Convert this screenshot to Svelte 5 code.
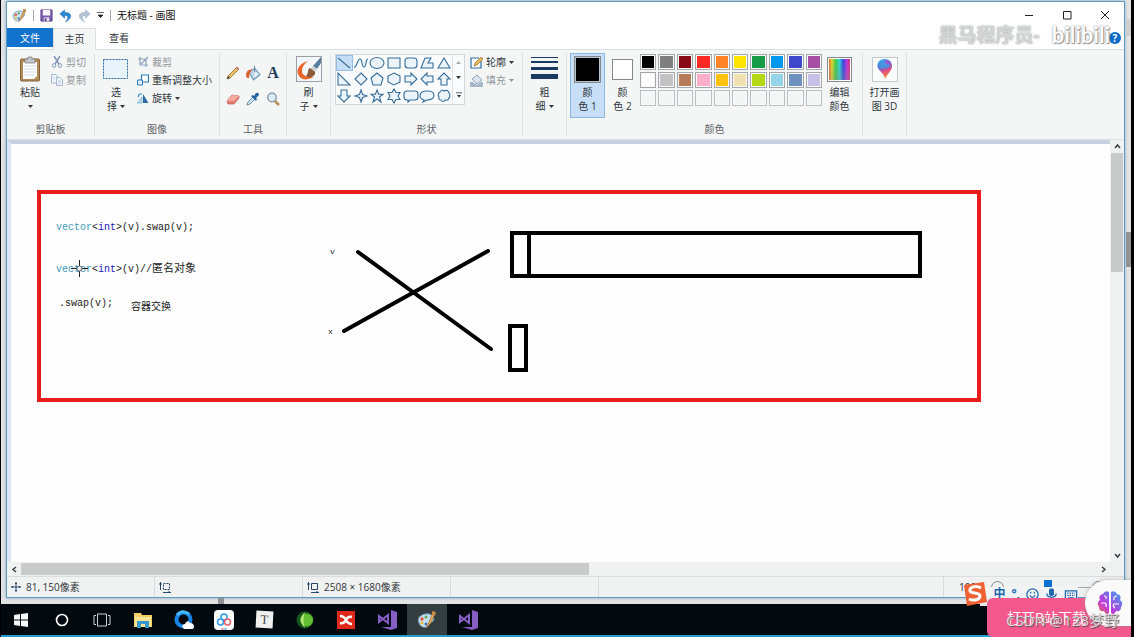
<script lang="ts">
  interface Shape {
    name: string;
    d: string;
  }

  // Shape gallery, each drawn in a 16x16 box
  const shapes: Shape[] = [
    { name: '直线', d: 'M2 3L14 13' },
    { name: '曲线', d: 'M1 12C4 13 4 4 7 4S8 12 11 12S12 4 15 4' },
    { name: '椭圆形', d: 'M1 8a7 5.500 0 1 0 14 0a7 5.500 0 1 0-14 0Z' },
    { name: '矩形', d: 'M2 3H14V13H2Z' },
    { name: '圆角矩形', d: 'M5 3H11Q14 3 14 6V10Q14 13 11 13H5Q2 13 2 10V6Q2 3 5 3Z' },
    { name: '多边形', d: 'M6 3H12L9 8H14V13H2Z' },
    { name: '三角形', d: 'M8 3L14 13H2Z' },
    { name: '直角三角形', d: 'M2 2V14H14Z' },
    { name: '菱形', d: 'M8 2L14 8L8 14L2 8Z' },
    { name: '五边形', d: 'M8 2L14 7L12 14H4L2 7Z' },
    { name: '六边形', d: 'M8 2L14 5V11L8 14L2 11V5Z' },
    { name: '右箭头', d: 'M2 5H8V2L14 8L8 14V11H2Z' },
    { name: '左箭头', d: 'M14 5H8V2L2 8L8 14V11H14Z' },
    { name: '向上箭头', d: 'M5 14V8H2L8 2L14 8H11V14Z' },
    { name: '向下箭头', d: 'M5 2V8H2L8 14L14 8H11V2Z' },
    { name: '四角星形', d: 'M8 2L9.500 6.500L14 8L9.500 9.500L8 14L6.500 9.500L2 8L6.500 6.500Z' },
    { name: '五角星形', d: 'M8 2L9.600 6.200H14L10.500 9L12 14L8 11L4 14L5.500 9L2 6.200H6.400Z' },
    { name: '六角星形', d: 'M8 1L10 4.500H14L12 8L14 11.500H10L8 15L6 11.500H2L4 8L2 4.500H6Z' },
    { name: '圆角矩形标注', d: 'M4 3H12Q15 3 15 6V9Q15 12 12 12H7L5 14V12H4Q1 12 1 9V6Q1 3 4 3Z' },
    { name: '椭圆形标注', d: 'M5 12Q1 11 1 8Q1 3 8 3T15 7Q15 12 8 12L4 14Z' },
    { name: '云形标注', d: 'M4 4Q6 1 8 3Q12 1 13 5Q15 8 13 10Q12 13 9 12Q7 15 5 12Q2 12 3 9Q1 6 4 4Z' },
  ];

  const palette = [
    ['#000000', '#7f7f7f', '#880b15', '#fb2a22', '#ff8427', '#ffe500', '#169c48', '#0097ec', '#3f48cc', '#a74ea5'],
    ['#ffffff', '#c3c3c3', '#b97a57', '#ffaec9', '#ffc20e', '#efe0ae', '#b4d816', '#94d5ea', '#6c91be', '#c8bfe7'],
    ['', '', '', '', '', '', '', '', '', ''],
  ];

  const apps = ['start', 'cortana', 'taskview', 'explorer', 'browser', 'cloud', 'typora', 'camtasia', 'xmind', 'vs', 'paint', 'vs'];

  let selectedShape = $state(0);
  let selectedColor = $state(1);
  let zoom = $state(50);
</script>

{#snippet caret()}
  <svg class="caret" viewBox="0 0 5 3" width="5" height="3"><path d="M0 0H5L2.500 3Z" fill="currentColor" /></svg>
{/snippet}

{#snippet paintIcon(size: number)}
  <svg viewBox="0 0 20 20" width={size} height={size}>
    <path d="M2 13C-1 7 6 3 12 4C18 5 18 12 14 12C11 12 13 16 10 17C7 18 3 17 2 13Z" fill="#c6e0ee" stroke="#6998b4" />
    <circle cx="5" cy="9" r="1.700" fill="#e5533d" /><circle cx="9" cy="7" r="1.500" fill="#55a84e" />
    <circle cx="5" cy="13" r="1.500" fill="#f0b431" /><circle cx="9" cy="14" r="1.500" fill="#3c73c9" />
    <path d="M16 2L12 12L9 18L14 13L18 3Z" fill="#e7ad67" stroke="#9b6632" stroke-width=".7" />
    <path d="M15 1L19 2L18 6L15 5Z" fill="#c68846" />
  </svg>
{/snippet}

<div class="desktop">
  <span class="behind upper"></span>
  <span class="behind side"></span>
  <span class="behind below"></span>

  <div class="window">
    <header class="titlebar">
      {@render paintIcon(15)}
      <span class="rule"></span>
      <button aria-label="保存">
        <svg viewBox="0 0 14 14" width="13" height="13">
          <path d="M1 1H13V13H1Z" fill="#7a5da8" stroke="#59408a" /><path d="M3 1H11V7H3Z" fill="#f7f4fb" /><path d="M4 9H10V13H4Z" fill="#e5dff0" /><path d="M5 10H7V13H5Z" fill="#59408a" />
        </svg>
      </button>
      <button aria-label="撤消">
        <svg viewBox="0 0 14 14" width="13" height="13"><path d="M1 5L6 1V4C14 3 15 10 7 14C11 9 10 7 6 7V10Z" fill="#2b8bd8" stroke="#1d69ad" stroke-width=".6" /></svg>
      </button>
      <button aria-label="重做">
        <svg viewBox="0 0 14 14" width="13" height="13"><path d="M13 5L8 1V4C0 3-1 10 7 14C3 9 4 7 8 7V10Z" fill="#b6c5d8" stroke="#93a7c2" stroke-width=".6" /></svg>
      </button>
      <button class="customize" aria-label="自定义快速访问工具栏">
        <svg viewBox="0 0 7 6" width="7" height="6"><path d="M0 .500H7M1 3H6L3.500 5.500Z" fill="#222" stroke="#222" stroke-width=".7" /></svg>
      </button>
      <span class="rule"></span>
      <h1>无标题 - 画图</h1>
      <div class="controls">
        <button aria-label="最小化"><svg viewBox="0 0 10 10" width="10" height="10"><path d="M1 5.500H9" /></svg></button>
        <button aria-label="最大化"><svg viewBox="0 0 10 10" width="10" height="10"><path d="M1.500 1.500H9V9H1.500Z" /></svg></button>
        <button aria-label="关闭"><svg viewBox="0 0 10 10" width="10" height="10"><path d="M1 1L9 9M9 1L1 9" /></svg></button>
      </div>
    </header>

    <nav class="tabs">
      <button class="file">文件</button>
      <button class="current">主页</button>
      <button>查看</button>
      <button class="help" aria-label="帮助">?</button>
    </nav>

    <div class="ribbon">
      <section class="group clipboard">
        <div class="body">
          <button class="big">
            <span class="pic">
              <svg viewBox="0 0 22 26" width="22" height="26">
                <rect x="1.500" y="3" width="19" height="22" rx="1" fill="#b28a56" stroke="#86653b" />
                <path d="M4 6H18V20L15 23H4Z" fill="#fbfdff" /><path d="M5 10H17M5 13H17M5 16H17M5 19H15" stroke="#d1dbe5" />
                <path d="M6 3H9V1H13V3H16V7H6Z" fill="#c2c5c9" stroke="#777" stroke-width=".7" />
              </svg>
            </span>
            <span>粘贴</span>
            <span>{@render caret()}</span>
          </button>
          <div class="list">
            <button class="off">
              <svg viewBox="0 0 12 12" width="12" height="12"><path d="M3 0L8 8M9 0L4 8" stroke="#8297b5" stroke-width="1.500" /><circle cx="3" cy="9.500" r="1.800" fill="none" stroke="#8297b5" /><circle cx="9" cy="9.500" r="1.800" fill="none" stroke="#8297b5" /></svg>
              剪切
            </button>
            <button class="off">
              <svg viewBox="0 0 12 12" width="12" height="12"><path d="M.500.500H5L7 3V9H.500Z" fill="#eef4fa" stroke="#a3b7cf" /><path d="M5.500 3.500H9L11.500 6V11.500H5.500Z" fill="#eef4fa" stroke="#a3b7cf" /><path d="M7 7H10M7 9H10M2 4H4" stroke="#bccbdc" /></svg>
              复制
            </button>
          </div>
        </div>
        <h2>剪贴板</h2>
      </section>

      <section class="group image">
        <div class="body">
          <button class="big">
            <span class="pic">
              <svg viewBox="0 0 26 22" width="26" height="22"><rect x=".500" y="1.500" width="24" height="19" fill="#e9f3fa" stroke="#2c66a0" stroke-dasharray="2 1" /></svg>
            </span>
            <span>选</span>
            <span>择{@render caret()}</span>
          </button>
          <div class="list">
            <button class="off">
              <svg viewBox="0 0 12 12" width="12" height="12"><path d="M3 1V9H11M1 3H9V11M4 8L11 1" fill="none" stroke="#8ea3bd" stroke-width="1.200" /></svg>
              裁剪
            </button>
            <button>
              <svg viewBox="0 0 12 12" width="12" height="12"><path d="M4.500 1H11.500V8H4.500Z" fill="#fff" stroke="#2f77b1" stroke-width="1.200" /><path d="M.500 6H5.500V11H.500Z" fill="#dfeefa" stroke="#2f77b1" /></svg>
              重新调整大小
            </button>
            <button>
              <svg viewBox="0 0 12 12" width="12" height="12"><path d="M6 11V2L11.500 11Z" fill="#2c6ba5" /><path d="M5 11V5L0 11Z" fill="#bfe0f4" stroke="#5d9ac5" stroke-width=".6" /><path d="M1 5Q2 1 5 2" fill="none" stroke="#3f94cb" stroke-width="1.300" /></svg>
              旋转{@render caret()}
            </button>
          </div>
        </div>
        <h2>图像</h2>
      </section>

      <section class="group tools">
        <div class="body">
          <button aria-label="铅笔"><svg viewBox="0 0 14 14" width="14" height="14"><path d="M1 13L2 10L11 1L13 3L4 12Z" fill="#edbe61" stroke="#8c6a37" stroke-width=".8" /><path d="M1 13L2 10L4 12Z" fill="#444" /><path d="M10 2L12 4L13 3L11 1Z" fill="#d47773" /></svg></button>
          <button aria-label="用颜色填充"><svg viewBox="0 0 14 14" width="15" height="15"><path d="M3 6L8 2L13 8L7 13Z" fill="#bed7e9" stroke="#6893b1" /><path d="M7 5L12 7L8 11Z" fill="#e8f3fa" /><path d="M0 9Q0 3 6 3L4 6Q3 7 3 11Q0 12 0 9Z" fill="#d86134" /><path d="M8 6V0" stroke="#6f8798" /></svg></button>
          <button class="letter" aria-label="文本">A</button>
          <button aria-label="橡皮擦"><svg viewBox="0 0 14 14" width="14" height="14"><path d="M1 9L6 3L13 4L13 6L8 12L2 12Z" fill="#e67d75" stroke="#b9554f" stroke-width=".7" /><path d="M1 9L6 3L13 4L8 9Z" fill="#f6aaa2" /></svg></button>
          <button aria-label="颜色选取器"><svg viewBox="0 0 14 14" width="14" height="14"><path d="M1 13L2 10L7 5L9 7L4 12Z" fill="#d3e9f5" stroke="#4b789f" stroke-width=".8" /><path d="M5 4L7 3L8 4L10 1Q13 0 13 3L10 6L11 7L10 9Z" fill="#2866a3" /></svg></button>
          <button aria-label="放大镜"><svg viewBox="0 0 14 14" width="14" height="14"><path d="M8 8L13 13" stroke="#ba8b59" stroke-width="2.500" /><circle cx="6" cy="5.500" r="4.300" fill="#d9edf9" stroke="#83919c" stroke-width="1.300" /></svg></button>
        </div>
        <h2>工具</h2>
      </section>

      <section class="group brush">
        <div class="body">
          <button class="big">
            <span class="pic">
              <svg viewBox="0 0 26 26" width="26" height="26">
                <rect x=".500" y=".500" width="25" height="25" fill="#f3f7fa" stroke="#9aa0a5" />
                <path d="M12 5C4 7 0 13 2 18C4 24 10 25 18 21C11 21 6 20 6 15C6 11 8 8 12 5Z" fill="#ea6429" />
                <path d="M25 1V7L21 13L17 10Z" fill="#597d9f" /><path d="M21 13L17 10L14 13L18 17Z" fill="#cdd2d5" />
                <path d="M14 12C11 13 13 17 10 20C14 23 20 20 19 16Z" fill="#8a5a3a" />
              </svg>
            </span>
            <span>刷</span>
            <span>子{@render caret()}</span>
          </button>
        </div>
      </section>

      <section class="group shapes">
        <div class="body">
          <div class="gallery">
            <div class="grid">
              {#each shapes as shape, i (shape.name)}
                <button
                  class:selected={selectedShape === i}
                  onclick={() => (selectedShape = i)}
                  aria-label={shape.name}
                >
                  <svg viewBox="0 0 16 16" width="16" height="16"><path d={shape.d} /></svg>
                </button>
              {/each}
            </div>
            <div class="pager">
              <button class="faded" aria-label="上一行"><svg viewBox="0 0 5 3" width="5" height="3"><path d="M0 3H5L2.500 0Z" fill="currentColor" /></svg></button>
              <button aria-label="下一行">{@render caret()}</button>
              <button aria-label="其他"><svg viewBox="0 0 7 6" width="6" height="6"><path d="M0 0H7V1H0ZM1 3H6L3.500 6Z" fill="currentColor" /></svg></button>
            </div>
          </div>
          <div class="list">
            <button>
              <svg viewBox="0 0 13 13" width="13" height="13"><path d="M11 5V12H1V2H9" fill="#fff" stroke="#2e6da6" stroke-width="1.200" /><path d="M4 10L5 7L11 1L13 3L7 9Z" fill="#e9b857" stroke="#916b36" stroke-width=".7" /></svg>
              轮廓{@render caret()}
            </button>
            <button class="off">
              <svg viewBox="0 0 13 13" width="13" height="13"><path d="M2 5L7 1L12 6L7 10Z" fill="#dce5ef" stroke="#8ea3bd" /><path d="M0 8H3L7 11L11 8H13V13H0Z" fill="#a6b6ca" /></svg>
              填充{@render caret()}
            </button>
          </div>
        </div>
        <h2>形状</h2>
      </section>

      <section class="group size">
        <div class="body">
          <button class="big">
            <span class="pic">
              <svg viewBox="0 0 27 26" width="27" height="26"><path d="M0 1H27V2H0ZM0 5H27V7H0ZM0 11H27V14H0ZM0 18H27V23H0Z" fill="#1b3a61" /></svg>
            </span>
            <span>粗</span>
            <span>细{@render caret()}</span>
          </button>
        </div>
      </section>

      <section class="group colors">
        <div class="body">
          <button class="big slot" class:selected={selectedColor === 1} onclick={() => (selectedColor = 1)}>
            <span class="pic"><i class="swatch primary"></i></span>
            <span>颜</span>
            <span>色 1</span>
          </button>
          <button class="big slot" class:selected={selectedColor === 2} onclick={() => (selectedColor = 2)}>
            <span class="pic"><i class="swatch secondary"></i></span>
            <span>颜</span>
            <span>色 2</span>
          </button>
          <div class="palette">
            {#each palette as row}
              {#each row as color}
                <button class:empty={!color} style:background-color={color || null} aria-label={color || '空'}></button>
              {/each}
            {/each}
          </div>
          <button class="big">
            <span class="pic"><i class="swatch spectrum"></i></span>
            <span>编辑</span>
            <span>颜色</span>
          </button>
        </div>
        <h2>颜色</h2>
      </section>

      <section class="group open3d">
        <div class="body">
          <button class="big">
            <span class="pic">
              <svg viewBox="0 0 26 26" width="26" height="26">
                <defs>
                  <linearGradient id="drop" x1="0" y1="0" x2=".3" y2="1">
                    <stop offset="0" stop-color="#27b9ea" /><stop offset=".45" stop-color="#5c72d8" /><stop offset=".7" stop-color="#df4d86" /><stop offset="1" stop-color="#f58b3b" />
                  </linearGradient>
                </defs>
                <rect x=".500" y="1.500" width="25" height="24" fill="#fbfcfc" stroke="#c6c9cb" />
                <path d="M13 3C7 3 4 8 6 12C8 16 12 17 13 23C15 18 20 15 20 10C20 6 17 3 13 3Z" fill="url(#drop)" />
                <path d="M12 5C8 6 7 9 9 12C13 13 18 12 18 8C17 5 15 4 12 5Z" fill="#4c92df" /><path d="M13 4Q18 4 19 9L14 8Z" fill="#9c59cf" />
              </svg>
            </span>
            <span>打开画</span>
            <span>图 3D</span>
          </button>
        </div>
      </section>
    </div>

    <main class="workspace">
      <div class="paper">
        <svg class="drawing" viewBox="0 0 1099 417" width="1099" height="417">
          <rect x="28" y="48" width="940" height="208" fill="none" stroke="#e81c1c" stroke-width="4" />
          <g class="code">
            <text x="45" y="86"><tspan class="type">vector</tspan>&lt;<tspan class="keyword">int</tspan>&gt;(v).swap(v);</text>
            <text x="45" y="128"><tspan class="type">vector</tspan>&lt;<tspan class="keyword">int</tspan>&gt;(v)//<tspan class="note">匿名对象</tspan></text>
            <text x="48" y="162">.swap(v);</text>
            <text x="120" y="166">容器交换</text>
            <text class="tiny" x="319" y="110">v</text>
            <text class="tiny" x="317" y="190">x</text>
          </g>
          <g class="ink">
            <path d="M347 108L480 205M333 187L477 107" stroke-linecap="round" />
            <path d="M501 89H909V132H501ZM518 89V132" />
            <path d="M499 182H515V226H499Z" />
          </g>
          <path d="M68.500 116V122M68.500 127V133M60 124.500H66M71 124.500H77" stroke="#222" />
          <circle cx="68.500" cy="124.500" r="2.500" fill="none" stroke="#667" />
        </svg>
      </div>
      <div class="scroll vertical">
        <button aria-label="向上滚动"><svg viewBox="0 0 7 7" width="7" height="7"><path d="M1 5L3.500 2L6 5" /></svg></button>
        <span class="thumb"></span>
        <button aria-label="向下滚动"><svg viewBox="0 0 7 7" width="7" height="7"><path d="M1 2L3.500 5L6 2" /></svg></button>
      </div>
    </main>
    <div class="scroll horizontal">
      <button aria-label="向左滚动"><svg viewBox="0 0 7 7" width="7" height="7"><path d="M5 1L2 3.500L5 6" /></svg></button>
      <span class="thumb"></span>
      <button aria-label="向右滚动"><svg viewBox="0 0 7 7" width="7" height="7"><path d="M2 1L5 3.500L2 6" /></svg></button>
    </div>

    <footer class="status">
      <span class="cell">
        <svg viewBox="0 0 10 10" width="10" height="10"><path d="M5 0V10M0 5H10M4 1.500H6M4 8.500H6M1.500 4V6M8.500 4V6" stroke="#27476c" /></svg>
        81, 150像素
      </span>
      <span class="cell">
        <svg viewBox="0 0 12 11" width="12" height="11"><path d="M1.500 0V8M0 2H3M4 10.500H12M10 9V11" stroke="#27476c" /><path d="M4.500 1.500H10.500V7.500H4.500Z" fill="none" stroke="#27476c" stroke-dasharray="2 1" /></svg>
      </span>
      <span class="cell">
        <svg viewBox="0 0 12 11" width="12" height="11"><path d="M1.500 0V8M0 2H3M4 10.500H12M10 9V11" stroke="#27476c" /><path d="M4.500 1.500H10.500V7.500H4.500Z" fill="none" stroke="#27476c" /></svg>
        2508 × 1680像素
      </span>
      <span class="cell"></span>
      <span class="cell rest"></span>
      <span class="zoom">
        <label for="zoom">100%</label>
        <button aria-label="缩小"></button>
        <input id="zoom" type="range" min="0" max="100" bind:value={zoom} />
        <button aria-label="放大"></button>
      </span>
    </footer>
  </div>

  <nav class="taskbar">
    {#each apps as app}
      <button class:active={app === 'paint'} aria-label={app}>
        {#if app === 'start'}
          <svg viewBox="0 0 14 14" width="14" height="14"><path d="M0 2L6 1V6.500H0ZM7 1L14 0V6.500H7ZM0 7.500H6V13L0 12ZM7 7.500H14V14L7 13Z" fill="#f5f7f8" /></svg>
        {:else if app === 'cortana'}
          <svg viewBox="0 0 14 14" width="14" height="14"><circle cx="7" cy="7" r="5.500" fill="none" stroke="#fff" stroke-width="1.600" /></svg>
        {:else if app === 'taskview'}
          <svg viewBox="0 0 18 14" width="18" height="14"><path d="M4.500 1H13.500V13H4.500ZM3 2.500H1V11.500H3M15 2.500H17V11.500H15" fill="none" stroke="#ccd1d3" /></svg>
        {:else if app === 'explorer'}
          <svg viewBox="0 0 20 18" width="20" height="18"><path d="M1 2H8L9 4H19V16H1Z" fill="#f3cf68" /><path d="M2 6H18V16H2Z" fill="#fde394" /><path d="M4 10H16V17H12V13H8V17H4Z" fill="#3598cf" /></svg>
        {:else if app === 'browser'}
          <svg viewBox="0 0 20 20" width="20" height="20"><circle cx="9.500" cy="9.500" r="7" fill="none" stroke="#1785e8" stroke-width="4" /><path d="M3 5Q8-1 15 4" fill="none" stroke="#43b8ff" stroke-width="3" /><path d="M10 19Q6 15 11 14Q13 9 16 13Q20 13 20 17Q20 19 18 19Z" fill="#fff" /></svg>
        {:else if app === 'cloud'}
          <svg viewBox="0 0 20 20" width="20" height="20"><rect width="20" height="20" rx="4" fill="#fafcfd" /><circle cx="10" cy="7" r="3" fill="none" stroke="#2a9bea" stroke-width="1.500" /><circle cx="6.500" cy="12" r="3" fill="none" stroke="#2a9bea" stroke-width="1.500" /><circle cx="13.500" cy="12" r="3" fill="none" stroke="#e95d67" stroke-width="1.500" /><path d="M7 19H10" stroke="#e95d67" /><path d="M10 19H13" stroke="#2a9bea" /></svg>
        {:else if app === 'typora'}
          <span class="typora">T</span>
        {:else if app === 'camtasia'}
          <svg viewBox="0 0 18 18" width="18" height="18"><circle cx="9" cy="9" r="8.500" fill="#17551d" /><circle cx="10.500" cy="9" r="6.500" fill="#65bd34" /><path d="M9 1Q1 9 9 17Q6 9 9 1Z" fill="#b8e67a" /></svg>
        {:else if app === 'xmind'}
          <svg viewBox="0 0 18 18" width="18" height="18"><path d="M0 0H18V18H0Z" fill="#df291d" /><path d="M3 5Q7 5 9 9T15 13M15 6Q11 5 9 9T3 12" fill="none" stroke="#fff" stroke-width="2.500" /></svg>
        {:else if app === 'vs'}
          <svg viewBox="0 0 20 20" width="20" height="20"><path d="M14 0L20 2V18L14 20L4 17H14Z" fill="#865fc5" /><path d="M2 6V12L11 5V13Z" fill="none" stroke="#865fc5" stroke-width="2" /></svg>
        {:else}
          {@render paintIcon(20)}
        {/if}
      </button>
    {/each}
  </nav>

  <div class="channel">
    <span>黑马程序员-</span>
    <b>bilibili</b>
  </div>

  <div class="ime">
    <svg class="sogou" viewBox="0 0 24 24" width="24" height="24">
      <path d="M1 3L21 0L24 20L4 24Z" fill="#ef6032" />
      <path d="M18 6C13 3 6 5 7 9C8 12 17 10 17 14C17 18 10 19 6 17" fill="none" stroke="#fff" stroke-width="3" />
    </svg>
    <span>中</span>
    <span>°,</span>
    <svg viewBox="0 0 14 14" width="13" height="13"><circle cx="7" cy="7" r="6" /><path d="M4 8Q7 12 10 8M5 4V6M9 4V6" /></svg>
    <svg viewBox="0 0 14 14" width="13" height="13"><path d="M5 2Q7 0 9 2V7Q7 9 5 7Z" fill="#2169ad" /><path d="M2 6Q2 10 7 10T12 6M7 10V13" /></svg>
    <svg viewBox="0 0 14 14" width="14" height="13"><path d="M1 3H13V12H1Z" /><path d="M3 5.500H11M3 8H11" stroke-dasharray="1.500 1" /><path d="M4 10.500H10" /></svg>
  </div>

  <a class="download" href="#app">打开B站下载</a>
  <button class="assistant" aria-label="助手">
    <svg viewBox="0 0 26 26" width="26" height="26">
      <defs>
        <linearGradient id="brain" x1="0" y1="1" x2="1" y2="0">
          <stop offset="0" stop-color="#ef6f43" /><stop offset=".35" stop-color="#bf38db" /><stop offset="1" stop-color="#35a5f0" />
        </linearGradient>
      </defs>
      <path d="M12 2Q8 0 6 4Q1 5 3 10Q-1 13 2 17Q2 22 7 21Q9 26 12 23ZM14 2Q18 0 20 4Q25 5 23 10Q27 13 24 17Q24 22 19 21Q17 26 14 23Z" fill="url(#brain)" />
      <path d="M7 6Q10 6 9 9M4 13H8Q10 14 9 17M20 6Q16 6 17 10M22 14H17Q15 16 18 18" fill="none" stroke="#fff" stroke-width="1.200" />
    </svg>
  </button>
  <span class="credit">CSDN @123梦野</span>
</div>

<style>
  :global(body) {
    margin: 0;
    font-family: 'Open Sans', 'Noto Sans CJK SC', sans-serif;
    font-size: 10px;
    line-height: 14px;
    color: #30363c;
  }

  button {
    margin: 0;
    padding: 0;
    border: 0;
    background: none;
    color: inherit;
    font: inherit;
  }

  svg {
    display: block;
    flex-shrink: 0;
  }

  h1,
  h2 {
    margin: 0;
    font-size: 10px;
    font-weight: 400;
  }

  .desktop {
    position: relative;
    box-sizing: border-box;
    height: 100vh;
    display: flex;
    flex-direction: column;
    overflow: hidden;
    background: #e2e4e5;
    border-left: 1px solid #000;
    border-right: 3px solid #000;
  }

  .behind {
    position: absolute;
    background: #8f9396;
  }

  .upper {
    top: 19px;
    right: 0;
    width: 5px;
    height: 17px;
    background: #cdcfd0;
  }

  .side {
    top: 232px;
    right: 0;
    width: 5px;
    height: 35px;
  }

  .below {
    bottom: 33px;
    left: 217px;
    width: 6px;
    height: 6px;
  }

  .window {
    flex: 1;
    min-height: 0;
    display: flex;
    flex-direction: column;
    margin: 1px 6px 6px 5px;
    border: 1px solid #5a9bc3;
    background: #fff;
    box-shadow: 0 0 3px #8aa9bd;
  }

  .titlebar {
    height: 26px;
    flex-shrink: 0;
    display: flex;
    align-items: center;
    gap: 6px;
    padding-left: 5px;
  }

  .rule {
    width: 1px;
    height: 11px;
    background: #a8abad;
  }

  .titlebar h1 {
    color: #111;
  }

  .controls {
    display: flex;
    margin-left: auto;
  }

  .controls button {
    width: 38px;
    height: 26px;
    display: grid;
    place-items: center;
  }

  .controls path {
    fill: none;
    stroke: #222;
  }

  .tabs {
    height: 22px;
    flex-shrink: 0;
    box-sizing: border-box;
    display: flex;
    border-bottom: 1px solid #dcdfe1;
  }

  .tabs button {
    width: 46px;
    height: 19px;
  }

  .tabs .file {
    background: #1272cc;
    color: #fff;
  }

  .tabs .current {
    box-sizing: border-box;
    width: 43px;
    height: 22px;
    padding-bottom: 2px;
    border: 1px solid #dcdfe1;
    border-bottom: 0;
    background: #f4f6f6;
  }

  .tabs .help {
    width: 12px;
    height: 12px;
    margin: 4px 3px 0 auto;
    border-radius: 50%;
    background: #0b6cc6;
    color: #fff;
    font-weight: 700;
    line-height: 12px;
  }

  .ribbon {
    height: 90px;
    flex-shrink: 0;
    box-sizing: border-box;
    display: flex;
    padding: 3px 0;
    background: #f4f6f6;
    border-bottom: 1px solid #dfe2e5;
  }

  .group {
    box-sizing: border-box;
    display: flex;
    flex-direction: column;
    border-right: 1px solid #e1e4e6;
  }

  .group h2 {
    color: #5d6267;
    text-align: center;
  }

  .body {
    flex: 1;
    display: flex;
    align-items: flex-start;
  }

  .big {
    display: flex;
    flex-direction: column;
    align-items: center;
    padding-top: 3px;
  }

  .big span {
    height: 14px;
    display: flex;
    align-items: center;
    white-space: nowrap;
  }

  .big .pic {
    height: 26px;
    margin-bottom: 3px;
  }

  .caret {
    margin-left: 3px;
  }

  .list {
    display: flex;
    flex-direction: column;
  }

  .list button {
    height: 18px;
    display: flex;
    align-items: center;
    gap: 3px;
    white-space: nowrap;
  }

  .list .caret {
    margin-left: 0;
  }

  .off {
    color: #92979b;
  }

  .clipboard {
    width: 88px;
  }

  .clipboard .body {
    gap: 10px;
    padding-left: 12px;
  }

  .clipboard .big .caret {
    margin-left: 0;
  }

  .image {
    width: 125px;
  }

  .image .body {
    gap: 8px;
    padding-left: 8px;
  }

  .tools {
    width: 67px;
  }

  .tools .body {
    display: grid;
    grid-template-columns: repeat(3, 20px);
    grid-template-rows: repeat(2, 26px);
    justify-content: center;
    padding-top: 7px;
  }

  .tools button {
    display: grid;
    place-items: center;
    place-self: center;
  }

  .tools .letter {
    color: #1f3d5e;
    font: 700 16px/16px 'Liberation Serif', serif;
  }

  .brush,
  .size,
  .open3d {
    width: 44px;
  }

  .brush .body,
  .size .body,
  .open3d .body {
    justify-content: center;
  }

  .shapes {
    width: 192px;
  }

  .shapes .body {
    gap: 5px;
    padding-left: 4px;
  }

  .gallery {
    box-sizing: border-box;
    width: 130px;
    height: 51px;
    display: flex;
    margin-top: 1px;
    border: 1px solid #d3d7da;
    background: #f9fbfc;
  }

  .grid {
    flex: 1;
    display: grid;
    grid-template-columns: repeat(7, 1fr);
    grid-template-rows: repeat(3, 1fr);
  }

  .grid button {
    display: grid;
    place-items: center;
  }

  .grid path {
    fill: #eaf4fa;
    stroke: #386e9a;
    stroke-width: 1.1;
  }

  .grid .selected {
    background: #c5def5;
    outline: 1px solid #93bde2;
    outline-offset: -1px;
  }

  .pager {
    width: 11px;
    display: grid;
    border-left: 1px solid #dfe2e4;
  }

  .pager button {
    display: grid;
    place-items: center;
  }

  .pager .caret {
    margin: 0;
  }

  .pager .faded {
    color: #a9adb0;
  }

  .shapes .list button {
    gap: 3px;
  }

  .colors {
    width: 296px;
  }

  .colors .body {
    padding-left: 3px;
  }

  .slot {
    box-sizing: border-box;
    width: 35px;
    height: 65px;
    padding-top: 2px;
    border: 1px solid transparent;
  }

  .slot.selected {
    background: #c7dff6;
    border-color: #8bb9e1;
  }

  .swatch {
    box-sizing: border-box;
    width: 25px;
    height: 25px;
    border: 1px solid #85898d;
    box-shadow: inset 0 0 0 1px #fff;
  }

  .primary {
    width: 27px;
    height: 27px;
    background: #000;
    box-shadow: inset 0 0 0 1px #b9c3cc;
  }

  .secondary {
    width: 21px;
    height: 21px;
    background: #fff;
  }

  .spectrum {
    background: linear-gradient(transparent, #8886), linear-gradient(90deg, #e33b2e, #e8df2c, #3bcf46, #2cd6dc, #3343e4, #cc30d9, #e2304c);
  }

  .palette {
    width: 182px;
    display: grid;
    grid-template-columns: repeat(10, 1fr);
    grid-auto-rows: 16px;
    gap: 2px;
    margin: 1px 5px 0 0;
  }

  .palette button {
    border: 1px solid #a4a8aa;
    box-shadow: inset 0 0 0 1px #f7f9f9;
  }

  .palette .empty {
    border-color: #bdc0c2;
  }

  .workspace {
    flex: 1;
    min-height: 0;
    display: flex;
    background: #f0f1f1;
  }

  .paper {
    flex: 1;
    overflow: hidden;
    border-top: 4px solid #c8d1e0;
    border-left: 4px solid #dce7f3;
    background: #fdfefd;
  }

  .code {
    font: 10px 'Liberation Mono', 'Noto Sans CJK SC', monospace;
    fill: #222;
  }

  .type {
    fill: #3d9ab9;
  }

  .keyword {
    fill: #2020c4;
  }

  .note {
    font-size: 11px;
  }

  .tiny {
    font-size: 8px;
  }

  .ink {
    fill: none;
    stroke: #000;
    stroke-width: 4;
  }

  .scroll {
    display: flex;
    align-items: center;
    flex-shrink: 0;
    background: #f0f1f1;
  }

  .scroll button {
    width: 14px;
    height: 13px;
    display: grid;
    place-items: center;
  }

  .scroll path {
    fill: none;
    stroke: #3d4144;
    stroke-width: 1.5;
  }

  .scroll .thumb {
    background: #c9cbca;
  }

  .scroll button:last-child {
    margin-left: auto;
  }

  .vertical {
    width: 14px;
    flex-direction: column;
  }

  .vertical .thumb {
    width: 12px;
    height: 119px;
  }

  .vertical button:last-child {
    margin: auto 0 0;
  }

  .horizontal {
    height: 14px;
    padding-right: 14px;
  }

  .horizontal .thumb {
    width: calc(51% + 5px);
    height: 12px;
  }

  .status {
    height: 21px;
    flex-shrink: 0;
    display: flex;
    background: #f0f1f1;
    border-top: 1px solid #dadddf;
    box-sizing: border-box;
  }

  .cell {
    width: 148px;
    box-sizing: border-box;
    display: flex;
    align-items: center;
    gap: 5px;
    padding-left: 4px;
    border-right: 1px solid #d8dadb;
  }

  .cell.rest {
    flex: 1;
  }

  .zoom {
    width: 180px;
    box-sizing: border-box;
    display: flex;
    align-items: center;
    padding-left: 15px;
  }

  .zoom label {
    width: 32px;
  }

  .zoom button {
    width: 13px;
    height: 13px;
    box-sizing: border-box;
    border: 1px solid #85898c;
    border-radius: 50%;
  }

  .zoom input {
    width: 88px;
    height: 14px;
    margin: 0;
    appearance: none;
    background: linear-gradient(#a5a8aa, #a5a8aa) center / 100% 1px no-repeat;
  }

  .zoom input::-webkit-slider-thumb {
    appearance: none;
    width: 8px;
    height: 14px;
    background: #0b6ed1;
  }

  .taskbar {
    height: 31px;
    flex-shrink: 0;
    display: grid;
    grid-template-columns: repeat(12, minmax(0, 1fr));
    padding-right: calc(100% - 487px);
    background: #020a0f;
    border-bottom: 2px solid #229dcc;
  }

  .taskbar button {
    display: grid;
    place-items: center;
  }

  .taskbar .active {
    background: #343d40;
  }

  .typora {
    width: 17px;
    height: 17px;
    background: #eff0ee;
    color: #444;
    font: 13px/17px 'Liberation Serif', serif;
    transform: rotate(3deg);
  }

  .channel {
    position: absolute;
    top: 22px;
    right: 21px;
    display: flex;
    align-items: center;
    gap: 12px;
    color: #d4d5d5;
    font-size: 19px;
    font-weight: 700;
    line-height: 26px;
    text-shadow: 0 0 2px #999;
  }

  .channel b {
    color: #fff;
    font: 700 22px/26px Lato, sans-serif;
    text-shadow: 0 0 2px #777, 1px 1px 1px #999;
  }

  .ime {
    position: absolute;
    right: 53px;
    bottom: 31px;
    display: flex;
    align-items: center;
    gap: 6px;
    color: #2169ad;
    font-size: 12px;
    font-weight: 700;
    background: linear-gradient(#f4f6f6, #e6e9eb) bottom right / 98px 19px no-repeat;
  }

  .ime svg:not(.sogou) {
    fill: none;
    stroke: #2169ad;
    stroke-width: 1.4;
  }

  .download {
    position: absolute;
    right: -3px;
    bottom: 0;
    width: 127px;
    height: 39px;
    padding-left: 20px;
    border-radius: 6px;
    background: #f4598e;
    color: #fff;
    font-size: 14px;
    line-height: 39px;
    text-decoration: none;
  }

  .assistant {
    position: absolute;
    right: -3px;
    bottom: 11px;
    width: 49px;
    height: 46px;
    display: grid;
    place-items: center;
    border-radius: 23px 0 0 23px;
    background: #fafafb;
    box-shadow: 0 0 4px #8888;
  }

  .credit {
    position: absolute;
    right: 12px;
    bottom: 7px;
    color: #d9d5d8;
    font-size: 15px;
    line-height: 20px;
    text-shadow: 1px 1px 1px #555;
  }
</style>
